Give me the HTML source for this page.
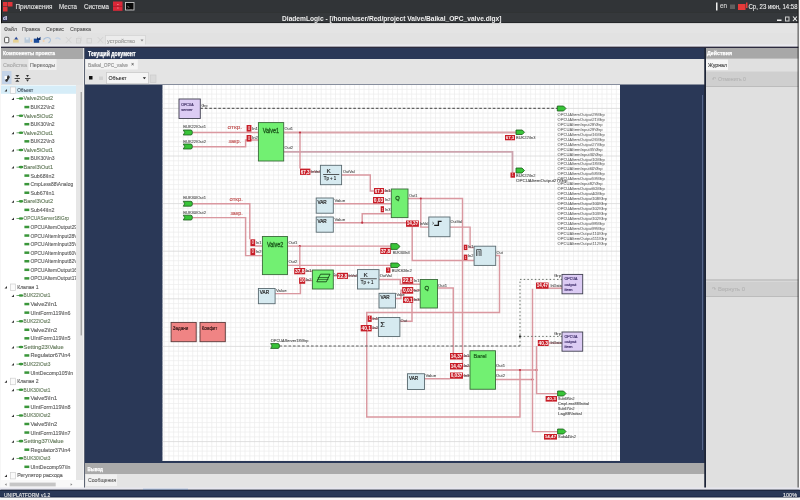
<!DOCTYPE html><html><head><meta charset="utf-8"><style>html,body{margin:0;padding:0;width:800px;height:500px;overflow:hidden;background:#2b2b2b}</style></head><body><svg width="800" height="500" viewBox="0 0 800 500" font-family="&quot;Liberation Sans&quot;, sans-serif" style="position:absolute;left:0;top:0;will-change:transform">
<rect x="0.00" y="0.00" width="800.00" height="12.50" fill="#313437"/>
<rect x="3.00" y="2.00" width="4.50" height="4.50" fill="#e0343a"/>
<rect x="8.00" y="2.00" width="4.50" height="4.50" fill="#e0343a"/>
<rect x="3.00" y="7.00" width="4.50" height="4.50" fill="#e0343a"/>
<text x="15.50" y="8.50" font-size="7.5" fill="#e6e6e6" stroke="#e6e6e6" stroke-width="0.12" textLength="37.00" lengthAdjust="spacingAndGlyphs">Приложения</text>
<text x="59.00" y="8.50" font-size="7.5" fill="#e6e6e6" stroke="#e6e6e6" stroke-width="0.12" textLength="18.00" lengthAdjust="spacingAndGlyphs">Места</text>
<text x="84.00" y="8.50" font-size="7.5" fill="#e6e6e6" stroke="#e6e6e6" stroke-width="0.12" textLength="25.00" lengthAdjust="spacingAndGlyphs">Система</text>
<rect x="113.00" y="1.50" width="9.50" height="9.30" fill="#dc2838"/>
<rect x="113.00" y="5.90" width="9.50" height="0.70" fill="#a01828"/>
<rect x="117.40" y="4.00" width="1.00" height="1.00" fill="#f4b0b8"/>
<rect x="117.40" y="7.50" width="1.00" height="1.00" fill="#f4b0b8"/>
<rect x="125.50" y="2.50" width="8.50" height="7.50" fill="#080808" stroke="#c8c8c8" stroke-width="0.9"/>
<text x="127.00" y="8.60" font-size="5" fill="#9a9a9a" textLength="5.00" lengthAdjust="spacingAndGlyphs">&gt;_</text>
<rect x="716.00" y="2.50" width="1.50" height="8.00" fill="#eeeeee"/>
<text x="720.00" y="8.34" font-size="6.5" fill="#d8d8d8" stroke="#d8d8d8" stroke-width="0.12" textLength="7.00" lengthAdjust="spacingAndGlyphs">en</text>
<rect x="730.00" y="4.50" width="5.00" height="4.50" fill="#606060"/>
<rect x="738.00" y="4.00" width="7.50" height="6.00" fill="#e63a3a"/>
<rect x="746.00" y="2.50" width="1.50" height="5.50" fill="#e63a3a"/>
<text x="748.50" y="8.88" font-size="8" fill="#f0f0f0" stroke="#f0f0f0" stroke-width="0.12" textLength="49.00" lengthAdjust="spacingAndGlyphs">Ср, 23 июн, 14:58</text>
<rect x="0.00" y="12.50" width="800.00" height="10.80" fill="#35383b"/>
<rect x="0.00" y="22.30" width="800.00" height="1.00" fill="#202224"/>
<rect x="2.80" y="16.40" width="4.60" height="4.00" fill="#2a2a6a"/>
<text x="3.00" y="20.00" font-size="4.5" fill="#ffffff" textLength="4.00" lengthAdjust="spacingAndGlyphs" font-weight="bold">dl</text>
<text x="282.00" y="20.60" font-size="6.8" fill="#f0f0f0" textLength="219.50" lengthAdjust="spacingAndGlyphs" font-weight="bold">DiademLogic - [/home/user/Red/project Valve/Baikal_OPC_valve.dlgx]</text>
<rect x="777.00" y="19.50" width="4.50" height="1.50" fill="#eeeeee"/>
<rect x="785.50" y="17.00" width="3.50" height="4.00" fill="none" stroke="#d0d0d0" stroke-width="1"/>
<polyline points="793.00,16.50 797.00,21.00" fill="none" stroke="#eeeeee" stroke-width="1.1"/>
<polyline points="797.00,16.50 793.00,21.00" fill="none" stroke="#eeeeee" stroke-width="1.1"/>
<rect x="0.00" y="23.30" width="800.00" height="22.70" fill="#e2e2e2"/>
<rect x="0.00" y="23.30" width="800.00" height="9.70" fill="#e4e4e4"/>
<rect x="0.00" y="23.50" width="1.00" height="476.50" fill="#1c1c1c"/>
<text x="4.00" y="30.66" font-size="6" fill="#5a5a5a" stroke="#5a5a5a" stroke-width="0.12" textLength="13.00" lengthAdjust="spacingAndGlyphs">Файл</text>
<text x="22.00" y="30.66" font-size="6" fill="#5a5a5a" stroke="#5a5a5a" stroke-width="0.12" textLength="18.00" lengthAdjust="spacingAndGlyphs">Правка</text>
<text x="46.00" y="30.66" font-size="6" fill="#5a5a5a" stroke="#5a5a5a" stroke-width="0.12" textLength="18.00" lengthAdjust="spacingAndGlyphs">Сервис</text>
<text x="70.00" y="30.66" font-size="6" fill="#5a5a5a" stroke="#5a5a5a" stroke-width="0.12" textLength="21.00" lengthAdjust="spacingAndGlyphs">Справка</text>
<rect x="4.6" y="37.3" width="4.2" height="5.4" rx="0.8" fill="#fbfbfb" stroke="#333" stroke-width="0.8"/>
<rect x="13.00" y="39.40" width="5.70" height="3.20" fill="#e6d296"/>
<polygon points="14.2,39.4 16.2,36.7 18.2,39.4" fill="#2a4a9a"/>
<rect x="24.50" y="37.50" width="5.50" height="5.30" fill="#b9c9d9"/>
<rect x="26.00" y="37.50" width="2.50" height="2.00" fill="#dfe8f0"/>
<rect x="33.80" y="38.60" width="5.40" height="4.20" fill="#1a4a9a"/>
<polygon points="37,36.7 38.5,38.5 40.5,36.7 40.5,40 37,40" fill="#0c2c6a"/>
<rect x="30.50" y="39.50" width="1.70" height="2.50" fill="#f0c8a0"/>
<path d="M43.5,39.5 Q47,36 50,38.5 Q51.5,41 48.5,42.8" fill="none" stroke="#a8c0dc" stroke-width="1.1"/>
<rect x="42.80" y="40.00" width="1.70" height="2.00" fill="#f2d2b0"/>
<path d="M60.5,39.5 Q57.5,36.5 55.5,39 " fill="none" stroke="#c4d4e8" stroke-width="1.1"/>
<polyline points="66.00,37.20 71.30,42.80" fill="none" stroke="#d2d2d2" stroke-width="1"/>
<polyline points="71.30,37.20 66.00,42.80" fill="none" stroke="#d2d2d2" stroke-width="1"/>
<rect x="76.50" y="38.50" width="4.00" height="4.50" fill="none" stroke="#cfcfcf" stroke-width="0.8"/>
<rect x="78.00" y="37.00" width="3.50" height="4.00" fill="none" stroke="#d8d8d8" stroke-width="0.7"/>
<rect x="87.00" y="38.50" width="4.50" height="4.50" fill="none" stroke="#cfcfcf" stroke-width="0.8"/>
<polyline points="97.80,37.20 103.00,42.80" fill="none" stroke="#d2d2d2" stroke-width="1"/>
<polyline points="103.00,37.20 97.80,42.80" fill="none" stroke="#d2d2d2" stroke-width="1"/>
<rect x="105.50" y="35.50" width="40.00" height="10.00" fill="#ececec" stroke="#d4d4d4" stroke-width="0.8"/>
<text x="107.00" y="42.66" font-size="6" fill="#9a9a9a" stroke="#9a9a9a" stroke-width="0.12" textLength="28.00" lengthAdjust="spacingAndGlyphs">устройство</text>
<polygon points="140.5,39.5 143.5,39.5 142,41.5" fill="#888"/>
<rect x="0.00" y="44.50" width="800.00" height="2.30" fill="#eaeaf0"/>
<rect x="0.00" y="46.80" width="800.00" height="1.20" fill="#2c2a3e"/>
<rect x="1.00" y="48.00" width="83.00" height="441.00" fill="#e2e2e2"/>
<rect x="1.00" y="48.00" width="82.50" height="11.00" fill="#a8a8a8"/>
<text x="3.00" y="55.23" font-size="6.2" fill="#ffffff" stroke="#ffffff" stroke-width="0.25" textLength="52.00" lengthAdjust="spacingAndGlyphs" font-weight="bold">Компоненты проекта</text>
<rect x="28.50" y="59.00" width="28.00" height="11.00" fill="#f1f1f1"/>
<text x="3.00" y="66.66" font-size="6" fill="#a8a8a8" stroke="#a8a8a8" stroke-width="0.12" textLength="24.00" lengthAdjust="spacingAndGlyphs">Свойства</text>
<text x="30.00" y="66.66" font-size="6" fill="#707070" stroke="#707070" stroke-width="0.12" textLength="25.00" lengthAdjust="spacingAndGlyphs">Переходы</text>
<rect x="2.00" y="71.00" width="9.50" height="13.00" fill="#c3d3e8"/>
<polygon points="5,81 8,75 10,77 7,82" fill="#333"/>
<rect x="4.50" y="76.00" width="2.50" height="3.00" fill="#fafafa"/>
<polygon points="15.3,75 19.3,75 17.3,77.3" fill="#333"/><rect x="14.6" y="78" width="5.4" height="0.9" fill="#333"/><polygon points="15.3,81.7 19.3,81.7 17.3,79.5" fill="#333"/>
<polygon points="26,75 29,75 27.5,77.2" fill="#333"/><rect x="25" y="78" width="5.4" height="0.9" fill="#333"/><polygon points="26,79.6 29,79.6 27.5,81.8" fill="#333"/>
<rect x="1.00" y="85.00" width="75.00" height="397.00" fill="#ffffff"/>
<rect x="76.00" y="85.00" width="7.50" height="397.00" fill="#e6e6e6"/>
<rect x="80.70" y="92.00" width="1.00" height="243.40" fill="#8a8a8a"/>
<rect x="83.50" y="48.00" width="1.00" height="441.00" fill="#fbfbfb"/>
<rect x="1.00" y="85.50" width="75.00" height="8.30" fill="#d6edf8"/>
<svg x="1" y="85" width="75" height="397" overflow="hidden"><g transform="translate(-1,-85)">
<polygon points="4.5,91.50 7,89.00 7,91.50" fill="#333"/>
<rect x="10.50" y="87.00" width="5.00" height="6.50" fill="#fbfbfb" stroke="#cfcfcf" stroke-width="0.7"/>
<text x="17.20" y="91.90" font-size="5.3" fill="#3e4e5c" stroke="#3e4e5c" stroke-width="0.12" textLength="16.02" lengthAdjust="spacingAndGlyphs">Объект</text>
<polygon points="11.5,100.06 14,97.56 14,100.06" fill="#333"/>
<rect x="16.50" y="98.27" width="2.50" height="0.70" fill="#3a8a3a"/>
<ellipse cx="21" cy="98.56" rx="2.4" ry="1.3" fill="#3a963a"/>
<text x="23.60" y="100.47" font-size="5.3" fill="#63795a" stroke="#63795a" stroke-width="0.12" textLength="29.37" lengthAdjust="spacingAndGlyphs">Valve2\Out2</text>
<rect x="24.40" y="105.83" width="4.90" height="2.50" fill="#3a963a"/>
<text x="30.40" y="109.03" font-size="5.3" fill="#606060" stroke="#606060" stroke-width="0.12" textLength="24.03" lengthAdjust="spacingAndGlyphs">BUK22\In2</text>
<polygon points="11.5,117.19 14,114.69 14,117.19" fill="#333"/>
<rect x="16.50" y="115.39" width="2.50" height="0.70" fill="#3a8a3a"/>
<ellipse cx="21" cy="115.69" rx="2.4" ry="1.3" fill="#3a963a"/>
<text x="23.60" y="117.59" font-size="5.3" fill="#63795a" stroke="#63795a" stroke-width="0.12" textLength="29.37" lengthAdjust="spacingAndGlyphs">Valve5\Out2</text>
<rect x="24.40" y="122.96" width="4.90" height="2.50" fill="#3a963a"/>
<text x="30.40" y="126.16" font-size="5.3" fill="#606060" stroke="#606060" stroke-width="0.12" textLength="24.03" lengthAdjust="spacingAndGlyphs">BUK30\In2</text>
<polygon points="11.5,134.32 14,131.82 14,134.32" fill="#333"/>
<rect x="16.50" y="132.52" width="2.50" height="0.70" fill="#3a8a3a"/>
<ellipse cx="21" cy="132.82" rx="2.4" ry="1.3" fill="#3a963a"/>
<text x="23.60" y="134.72" font-size="5.3" fill="#63795a" stroke="#63795a" stroke-width="0.12" textLength="29.37" lengthAdjust="spacingAndGlyphs">Valve2\Out1</text>
<rect x="24.40" y="140.09" width="4.90" height="2.50" fill="#3a963a"/>
<text x="30.40" y="143.29" font-size="5.3" fill="#606060" stroke="#606060" stroke-width="0.12" textLength="24.03" lengthAdjust="spacingAndGlyphs">BUK22\In3</text>
<polygon points="11.5,151.45 14,148.95 14,151.45" fill="#333"/>
<rect x="16.50" y="149.65" width="2.50" height="0.70" fill="#3a8a3a"/>
<ellipse cx="21" cy="149.95" rx="2.4" ry="1.3" fill="#3a963a"/>
<text x="23.60" y="151.85" font-size="5.3" fill="#63795a" stroke="#63795a" stroke-width="0.12" textLength="29.37" lengthAdjust="spacingAndGlyphs">Valve5\Out1</text>
<rect x="24.40" y="157.22" width="4.90" height="2.50" fill="#3a963a"/>
<text x="30.40" y="160.42" font-size="5.3" fill="#606060" stroke="#606060" stroke-width="0.12" textLength="24.03" lengthAdjust="spacingAndGlyphs">BUK30\In3</text>
<polygon points="11.5,168.58 14,166.08 14,168.58" fill="#333"/>
<rect x="16.50" y="166.78" width="2.50" height="0.70" fill="#3a8a3a"/>
<ellipse cx="21" cy="167.08" rx="2.4" ry="1.3" fill="#3a963a"/>
<text x="23.60" y="168.98" font-size="5.3" fill="#63795a" stroke="#63795a" stroke-width="0.12" textLength="29.37" lengthAdjust="spacingAndGlyphs">Barel3\Out1</text>
<rect x="24.40" y="174.35" width="4.90" height="2.50" fill="#3a963a"/>
<text x="30.40" y="177.55" font-size="5.3" fill="#606060" stroke="#606060" stroke-width="0.12" textLength="24.03" lengthAdjust="spacingAndGlyphs">Sub68\In2</text>
<rect x="24.40" y="182.91" width="4.90" height="2.50" fill="#3a963a"/>
<text x="30.40" y="186.11" font-size="5.3" fill="#606060" stroke="#606060" stroke-width="0.12" textLength="42.72" lengthAdjust="spacingAndGlyphs">CmpLess88\Analog</text>
<rect x="24.40" y="191.48" width="4.90" height="2.50" fill="#3a963a"/>
<text x="30.40" y="194.68" font-size="5.3" fill="#606060" stroke="#606060" stroke-width="0.12" textLength="24.03" lengthAdjust="spacingAndGlyphs">Sub67\In1</text>
<polygon points="11.5,202.84 14,200.34 14,202.84" fill="#333"/>
<rect x="16.50" y="201.04" width="2.50" height="0.70" fill="#3a8a3a"/>
<ellipse cx="21" cy="201.34" rx="2.4" ry="1.3" fill="#3a963a"/>
<text x="23.60" y="203.25" font-size="5.3" fill="#63795a" stroke="#63795a" stroke-width="0.12" textLength="29.37" lengthAdjust="spacingAndGlyphs">Barel3\Out2</text>
<rect x="24.40" y="208.61" width="4.90" height="2.50" fill="#3a963a"/>
<text x="30.40" y="211.81" font-size="5.3" fill="#606060" stroke="#606060" stroke-width="0.12" textLength="24.03" lengthAdjust="spacingAndGlyphs">Sub44\In2</text>
<polygon points="11.5,219.97 14,217.47 14,219.97" fill="#333"/>
<rect x="16.50" y="218.17" width="2.50" height="0.70" fill="#3a8a3a"/>
<ellipse cx="21" cy="218.47" rx="2.4" ry="1.3" fill="#3a963a"/>
<text x="23.60" y="220.38" font-size="5.3" fill="#63795a" stroke="#63795a" stroke-width="0.12" textLength="45.39" lengthAdjust="spacingAndGlyphs">OPCUAServer18\Grp</text>
<rect x="24.40" y="225.74" width="4.90" height="2.50" fill="#3a963a"/>
<text x="30.40" y="228.94" font-size="5.3" fill="#606060" stroke="#606060" stroke-width="0.12" textLength="56.07" lengthAdjust="spacingAndGlyphs">OPCUAItemOutput29\Grp</text>
<rect x="24.40" y="234.30" width="4.90" height="2.50" fill="#3a963a"/>
<text x="30.40" y="237.50" font-size="5.3" fill="#606060" stroke="#606060" stroke-width="0.12" textLength="53.40" lengthAdjust="spacingAndGlyphs">OPCUAItemInput28\Grp</text>
<rect x="24.40" y="242.87" width="4.90" height="2.50" fill="#3a963a"/>
<text x="30.40" y="246.07" font-size="5.3" fill="#606060" stroke="#606060" stroke-width="0.12" textLength="53.40" lengthAdjust="spacingAndGlyphs">OPCUAItemInput35\Grp</text>
<rect x="24.40" y="251.43" width="4.90" height="2.50" fill="#3a963a"/>
<text x="30.40" y="254.63" font-size="5.3" fill="#606060" stroke="#606060" stroke-width="0.12" textLength="53.40" lengthAdjust="spacingAndGlyphs">OPCUAItemInput60\Grp</text>
<rect x="24.40" y="260.00" width="4.90" height="2.50" fill="#3a963a"/>
<text x="30.40" y="263.20" font-size="5.3" fill="#606060" stroke="#606060" stroke-width="0.12" textLength="53.40" lengthAdjust="spacingAndGlyphs">OPCUAItemInput82\Grp</text>
<rect x="24.40" y="268.56" width="4.90" height="2.50" fill="#3a963a"/>
<text x="30.40" y="271.76" font-size="5.3" fill="#606060" stroke="#606060" stroke-width="0.12" textLength="56.07" lengthAdjust="spacingAndGlyphs">OPCUAItemOutput16\Grp</text>
<rect x="24.40" y="277.13" width="4.90" height="2.50" fill="#3a963a"/>
<text x="30.40" y="280.33" font-size="5.3" fill="#606060" stroke="#606060" stroke-width="0.12" textLength="56.07" lengthAdjust="spacingAndGlyphs">OPCUAItemOutput17\Grp</text>
<polygon points="4.5,288.50 7,286.00 7,288.50" fill="#333"/>
<rect x="10.50" y="284.00" width="5.00" height="6.50" fill="#fbfbfb" stroke="#cfcfcf" stroke-width="0.7"/>
<text x="17.20" y="288.89" font-size="5.3" fill="#5a5a5a" stroke="#5a5a5a" stroke-width="0.12" textLength="21.36" lengthAdjust="spacingAndGlyphs">Клапан 1</text>
<polygon points="11.5,297.06 14,294.56 14,297.06" fill="#333"/>
<rect x="16.50" y="295.26" width="2.50" height="0.70" fill="#3a8a3a"/>
<ellipse cx="21" cy="295.56" rx="2.4" ry="1.3" fill="#3a963a"/>
<text x="23.60" y="297.46" font-size="5.3" fill="#63795a" stroke="#63795a" stroke-width="0.12" textLength="26.70" lengthAdjust="spacingAndGlyphs">BUK22\Out1</text>
<rect x="24.40" y="302.82" width="4.90" height="2.50" fill="#3a963a"/>
<text x="30.40" y="306.02" font-size="5.3" fill="#606060" stroke="#606060" stroke-width="0.12" textLength="26.70" lengthAdjust="spacingAndGlyphs">Valve2\In1</text>
<rect x="24.40" y="311.39" width="4.90" height="2.50" fill="#3a963a"/>
<text x="30.40" y="314.59" font-size="5.3" fill="#606060" stroke="#606060" stroke-width="0.12" textLength="40.05" lengthAdjust="spacingAndGlyphs">UIntForm119\In6</text>
<polygon points="11.5,322.75 14,320.25 14,322.75" fill="#333"/>
<rect x="16.50" y="320.95" width="2.50" height="0.70" fill="#3a8a3a"/>
<ellipse cx="21" cy="321.25" rx="2.4" ry="1.3" fill="#3a963a"/>
<text x="23.60" y="323.15" font-size="5.3" fill="#63795a" stroke="#63795a" stroke-width="0.12" textLength="26.70" lengthAdjust="spacingAndGlyphs">BUK22\Out2</text>
<rect x="24.40" y="328.52" width="4.90" height="2.50" fill="#3a963a"/>
<text x="30.40" y="331.72" font-size="5.3" fill="#606060" stroke="#606060" stroke-width="0.12" textLength="26.70" lengthAdjust="spacingAndGlyphs">Valve2\In2</text>
<rect x="24.40" y="337.08" width="4.90" height="2.50" fill="#3a963a"/>
<text x="30.40" y="340.28" font-size="5.3" fill="#606060" stroke="#606060" stroke-width="0.12" textLength="40.05" lengthAdjust="spacingAndGlyphs">UIntForm119\In5</text>
<polygon points="11.5,348.45 14,345.95 14,348.45" fill="#333"/>
<rect x="16.50" y="346.65" width="2.50" height="0.70" fill="#3a8a3a"/>
<ellipse cx="21" cy="346.95" rx="2.4" ry="1.3" fill="#3a963a"/>
<text x="23.60" y="348.85" font-size="5.3" fill="#63795a" stroke="#63795a" stroke-width="0.12" textLength="40.05" lengthAdjust="spacingAndGlyphs">Setting23\Value</text>
<rect x="24.40" y="354.21" width="4.90" height="2.50" fill="#3a963a"/>
<text x="30.40" y="357.41" font-size="5.3" fill="#606060" stroke="#606060" stroke-width="0.12" textLength="40.05" lengthAdjust="spacingAndGlyphs">Regulator67\In4</text>
<polygon points="11.5,365.58 14,363.08 14,365.58" fill="#333"/>
<rect x="16.50" y="363.78" width="2.50" height="0.70" fill="#3a8a3a"/>
<ellipse cx="21" cy="364.08" rx="2.4" ry="1.3" fill="#3a963a"/>
<text x="23.60" y="365.98" font-size="5.3" fill="#63795a" stroke="#63795a" stroke-width="0.12" textLength="26.70" lengthAdjust="spacingAndGlyphs">BUK22\Out3</text>
<rect x="24.40" y="371.34" width="4.90" height="2.50" fill="#3a963a"/>
<text x="30.40" y="374.54" font-size="5.3" fill="#606060" stroke="#606060" stroke-width="0.12" textLength="42.72" lengthAdjust="spacingAndGlyphs">UIntDecomp105\In</text>
<polygon points="4.5,382.71 7,380.21 7,382.71" fill="#333"/>
<rect x="10.50" y="378.21" width="5.00" height="6.50" fill="#fbfbfb" stroke="#cfcfcf" stroke-width="0.7"/>
<text x="17.20" y="383.11" font-size="5.3" fill="#5a5a5a" stroke="#5a5a5a" stroke-width="0.12" textLength="21.36" lengthAdjust="spacingAndGlyphs">Клапан 2</text>
<polygon points="11.5,391.27 14,388.77 14,391.27" fill="#333"/>
<rect x="16.50" y="389.47" width="2.50" height="0.70" fill="#3a8a3a"/>
<ellipse cx="21" cy="389.77" rx="2.4" ry="1.3" fill="#3a963a"/>
<text x="23.60" y="391.67" font-size="5.3" fill="#63795a" stroke="#63795a" stroke-width="0.12" textLength="26.70" lengthAdjust="spacingAndGlyphs">BUK30\Out1</text>
<rect x="24.40" y="397.04" width="4.90" height="2.50" fill="#3a963a"/>
<text x="30.40" y="400.24" font-size="5.3" fill="#606060" stroke="#606060" stroke-width="0.12" textLength="26.70" lengthAdjust="spacingAndGlyphs">Valve5\In1</text>
<rect x="24.40" y="405.60" width="4.90" height="2.50" fill="#3a963a"/>
<text x="30.40" y="408.80" font-size="5.3" fill="#606060" stroke="#606060" stroke-width="0.12" textLength="40.05" lengthAdjust="spacingAndGlyphs">UIntForm119\In8</text>
<polygon points="11.5,416.97 14,414.47 14,416.97" fill="#333"/>
<rect x="16.50" y="415.17" width="2.50" height="0.70" fill="#3a8a3a"/>
<ellipse cx="21" cy="415.47" rx="2.4" ry="1.3" fill="#3a963a"/>
<text x="23.60" y="417.37" font-size="5.3" fill="#63795a" stroke="#63795a" stroke-width="0.12" textLength="26.70" lengthAdjust="spacingAndGlyphs">BUK30\Out2</text>
<rect x="24.40" y="422.73" width="4.90" height="2.50" fill="#3a963a"/>
<text x="30.40" y="425.93" font-size="5.3" fill="#606060" stroke="#606060" stroke-width="0.12" textLength="26.70" lengthAdjust="spacingAndGlyphs">Valve5\In2</text>
<rect x="24.40" y="431.30" width="4.90" height="2.50" fill="#3a963a"/>
<text x="30.40" y="434.50" font-size="5.3" fill="#606060" stroke="#606060" stroke-width="0.12" textLength="40.05" lengthAdjust="spacingAndGlyphs">UIntForm119\In7</text>
<polygon points="11.5,442.66 14,440.16 14,442.66" fill="#333"/>
<rect x="16.50" y="440.86" width="2.50" height="0.70" fill="#3a8a3a"/>
<ellipse cx="21" cy="441.16" rx="2.4" ry="1.3" fill="#3a963a"/>
<text x="23.60" y="443.06" font-size="5.3" fill="#63795a" stroke="#63795a" stroke-width="0.12" textLength="40.05" lengthAdjust="spacingAndGlyphs">Setting37\Value</text>
<rect x="24.40" y="448.43" width="4.90" height="2.50" fill="#3a963a"/>
<text x="30.40" y="451.63" font-size="5.3" fill="#606060" stroke="#606060" stroke-width="0.12" textLength="40.05" lengthAdjust="spacingAndGlyphs">Regulator37\In4</text>
<polygon points="11.5,459.79 14,457.29 14,459.79" fill="#333"/>
<rect x="16.50" y="457.99" width="2.50" height="0.70" fill="#3a8a3a"/>
<ellipse cx="21" cy="458.29" rx="2.4" ry="1.3" fill="#3a963a"/>
<text x="23.60" y="460.19" font-size="5.3" fill="#63795a" stroke="#63795a" stroke-width="0.12" textLength="26.70" lengthAdjust="spacingAndGlyphs">BUK30\Out3</text>
<rect x="24.40" y="465.56" width="4.90" height="2.50" fill="#3a963a"/>
<text x="30.40" y="468.76" font-size="5.3" fill="#606060" stroke="#606060" stroke-width="0.12" textLength="40.05" lengthAdjust="spacingAndGlyphs">UIntDecomp97\In</text>
<polygon points="4.5,476.92 7,474.42 7,476.92" fill="#333"/>
<rect x="10.50" y="472.42" width="5.00" height="6.50" fill="#fbfbfb" stroke="#cfcfcf" stroke-width="0.7"/>
<text x="17.20" y="477.32" font-size="5.3" fill="#5a5a5a" stroke="#5a5a5a" stroke-width="0.12" textLength="45.39" lengthAdjust="spacingAndGlyphs">Регулятор расхода</text>
</g></svg>
<rect x="1.00" y="480.00" width="83.00" height="9.00" fill="#f8f8f8"/>
<polygon points="4.8,484.5 6.6,483.2 6.6,485.8" fill="#888"/>
<rect x="9.60" y="482.60" width="46.10" height="3.80" fill="#c6c6c6"/>
<polygon points="70.6,483.2 72.4,484.5 70.6,485.8" fill="#888"/>
<rect x="84.50" y="48.00" width="620.00" height="441.00" fill="#2a3857"/>
<text x="88.00" y="56.27" font-size="6.3" fill="#ffffff" stroke="#ffffff" stroke-width="0.25" textLength="47.50" lengthAdjust="spacingAndGlyphs" font-weight="bold">Текущий документ</text>
<rect x="85.00" y="59.00" width="619.50" height="25.50" fill="#e4e4e4"/>
<rect x="86.00" y="59.40" width="51.80" height="10.00" fill="#f4f4f4"/>
<text x="88.00" y="66.56" font-size="6" fill="#8c8c8c" stroke="#8c8c8c" stroke-width="0.12" textLength="40.00" lengthAdjust="spacingAndGlyphs">Baikal_OPC_valve</text>
<text x="131.30" y="66.38" font-size="5.5" fill="#666" stroke="#666" stroke-width="0.12" textLength="2.70" lengthAdjust="spacingAndGlyphs">×</text>
<rect x="89.00" y="76.00" width="3.50" height="3.50" fill="#101010"/>
<rect x="99.50" y="76.50" width="1.00" height="3.50" fill="#c0c0c0"/>
<rect x="101.50" y="76.50" width="1.00" height="3.50" fill="#c0c0c0"/>
<rect x="106.50" y="72.50" width="41.90" height="11.20" fill="#f5f5f5" stroke="#cacaca" stroke-width="0.8"/>
<text x="108.50" y="80.03" font-size="6.2" fill="#303030" stroke="#303030" stroke-width="0.12" textLength="18.00" lengthAdjust="spacingAndGlyphs">Объект</text>
<polygon points="142.8,77.3 146,77.3 144.4,79.3" fill="#222"/>
<rect x="150.20" y="75.00" width="5.80" height="7.50" fill="#dadada" stroke="#c8c8c8" stroke-width="0.6"/>
<rect x="702.00" y="95.00" width="1.00" height="355.00" fill="#56668a"/>
<rect x="85.00" y="463.00" width="619.50" height="11.00" fill="#aaaaaa"/>
<text x="87.50" y="470.59" font-size="5.8" fill="#ffffff" stroke="#ffffff" stroke-width="0.25" textLength="15.50" lengthAdjust="spacingAndGlyphs" font-weight="bold">Вывод</text>
<rect x="85.00" y="474.00" width="619.50" height="15.00" fill="#e4e4e4"/>
<rect x="86.00" y="474.50" width="31.00" height="11.50" fill="#f1f1f1"/>
<text x="88.00" y="482.09" font-size="5.8" fill="#606060" stroke="#606060" stroke-width="0.12" textLength="28.00" lengthAdjust="spacingAndGlyphs">Сообщения</text>
<rect x="704.50" y="48.00" width="1.50" height="441.00" fill="#1d2538"/>
<rect x="706.00" y="48.00" width="93.00" height="441.00" fill="#e0e0e0"/>
<rect x="706.00" y="48.00" width="93.00" height="10.60" fill="#a8a8a8"/>
<text x="707.00" y="55.23" font-size="6.2" fill="#ffffff" stroke="#ffffff" stroke-width="0.25" textLength="25.00" lengthAdjust="spacingAndGlyphs" font-weight="bold">Действия</text>
<rect x="706.00" y="59.50" width="22.00" height="10.50" fill="#f6f6f6"/>
<text x="708.00" y="66.66" font-size="6" fill="#404040" stroke="#404040" stroke-width="0.12" textLength="19.00" lengthAdjust="spacingAndGlyphs">Журнал</text>
<rect x="706.00" y="71.50" width="93.00" height="14.50" fill="#cfcfcf"/>
<rect x="706.00" y="86.00" width="93.00" height="1.00" fill="#bcbcbc"/>
<text x="712.00" y="80.78" font-size="5.5" fill="#b4b4b4" stroke="#b4b4b4" stroke-width="0.12" textLength="4.00" lengthAdjust="spacingAndGlyphs">↶</text>
<text x="718.00" y="80.89" font-size="5.8" fill="#b4b4b4" stroke="#b4b4b4" stroke-width="0.12" textLength="28.00" lengthAdjust="spacingAndGlyphs">Отменить 0</text>
<rect x="706.00" y="279.00" width="93.00" height="2.00" fill="#c6c6c6"/>
<rect x="706.00" y="281.50" width="93.00" height="14.50" fill="#cfcfcf"/>
<rect x="706.00" y="296.00" width="93.00" height="1.00" fill="#bcbcbc"/>
<text x="712.00" y="290.98" font-size="5.5" fill="#b4b4b4" stroke="#b4b4b4" stroke-width="0.12" textLength="4.00" lengthAdjust="spacingAndGlyphs">↷</text>
<text x="718.00" y="291.09" font-size="5.8" fill="#b4b4b4" stroke="#b4b4b4" stroke-width="0.12" textLength="27.00" lengthAdjust="spacingAndGlyphs">Вернуть 0</text>
<rect x="797.70" y="0.00" width="1.00" height="500.00" fill="#111111"/>
<rect x="798.70" y="0.00" width="1.30" height="500.00" fill="#f6f6f6"/>
<rect x="0.00" y="0.00" width="1.00" height="500.00" fill="#f6f6f6"/>
<rect x="1.00" y="0.00" width="1.00" height="23.20" fill="#111111"/>
<rect x="0.00" y="489.60" width="800.00" height="7.90" fill="#2a3857"/>
<rect x="0.00" y="489.60" width="800.00" height="1.00" fill="#141c30"/>
<rect x="0.00" y="496.30" width="800.00" height="1.20" fill="#1d2848"/>
<rect x="0.00" y="497.50" width="800.00" height="2.50" fill="#f8f8f8"/>
<rect x="0.00" y="487.50" width="800.00" height="2.10" fill="#e6e6ee"/>
<g opacity="0.35">
<rect x="143.00" y="488.60" width="45.00" height="1.20" fill="#5080c0"/>
</g>
<text x="4.00" y="496.66" font-size="6" fill="#e8e8e8" stroke="#e8e8e8" stroke-width="0.12" textLength="46.40" lengthAdjust="spacingAndGlyphs">UNIPLATFORM v1.2</text>
<text x="783.00" y="496.60" font-size="5" fill="#e8e8e8" stroke="#e8e8e8" stroke-width="0.12" textLength="14.00" lengthAdjust="spacingAndGlyphs">100%</text>
<rect x="162.50" y="85.00" width="457.50" height="376.00" fill="#ffffff"/>
<svg x="162.5" y="85" width="457.5" height="376" overflow="hidden"><g transform="translate(-162.5,-85)">
<path d="M159.40 85V461M164.16 85V461M168.92 85V461M173.68 85V461M178.44 85V461M183.20 85V461M187.96 85V461M192.72 85V461M197.48 85V461M202.24 85V461M207.00 85V461M211.76 85V461M216.52 85V461M221.28 85V461M226.04 85V461M230.80 85V461M235.56 85V461M240.32 85V461M245.08 85V461M249.84 85V461M254.60 85V461M259.36 85V461M264.12 85V461M268.88 85V461M273.64 85V461M278.40 85V461M283.16 85V461M287.92 85V461M292.68 85V461M297.44 85V461M302.20 85V461M306.96 85V461M311.72 85V461M316.48 85V461M321.24 85V461M326.00 85V461M330.76 85V461M335.52 85V461M340.28 85V461M345.04 85V461M349.80 85V461M354.56 85V461M359.32 85V461M364.08 85V461M368.84 85V461M373.60 85V461M378.36 85V461M383.12 85V461M387.88 85V461M392.64 85V461M397.40 85V461M402.16 85V461M406.92 85V461M411.68 85V461M416.44 85V461M421.20 85V461M425.96 85V461M430.72 85V461M435.48 85V461M440.24 85V461M445.00 85V461M449.76 85V461M454.52 85V461M459.28 85V461M464.04 85V461M468.80 85V461M473.56 85V461M478.32 85V461M483.08 85V461M487.84 85V461M492.60 85V461M497.36 85V461M502.12 85V461M506.88 85V461M511.64 85V461M516.40 85V461M521.16 85V461M525.92 85V461M530.68 85V461M535.44 85V461M540.20 85V461M544.96 85V461M549.72 85V461M554.48 85V461M559.24 85V461M564.00 85V461M568.76 85V461M573.52 85V461M578.28 85V461M583.04 85V461M587.80 85V461M592.56 85V461M597.32 85V461M602.08 85V461M606.84 85V461M611.60 85V461M616.36 85V461M162.5 84.60H620M162.5 89.36H620M162.5 94.12H620M162.5 98.88H620M162.5 103.64H620M162.5 113.16H620M162.5 117.92H620M162.5 122.68H620M162.5 127.44H620M162.5 132.20H620M162.5 136.96H620M162.5 141.72H620M162.5 146.48H620M162.5 151.24H620M162.5 160.76H620M162.5 165.52H620M162.5 170.28H620M162.5 175.04H620M162.5 179.80H620M162.5 184.56H620M162.5 189.32H620M162.5 194.08H620M162.5 198.84H620M162.5 208.36H620M162.5 213.12H620M162.5 217.88H620M162.5 222.64H620M162.5 227.40H620M162.5 232.16H620M162.5 236.92H620M162.5 241.68H620M162.5 246.44H620M162.5 255.96H620M162.5 260.72H620M162.5 265.48H620M162.5 270.24H620M162.5 275.00H620M162.5 279.76H620M162.5 284.52H620M162.5 289.28H620M162.5 294.04H620M162.5 303.56H620M162.5 308.32H620M162.5 313.08H620M162.5 317.84H620M162.5 322.60H620M162.5 327.36H620M162.5 332.12H620M162.5 336.88H620M162.5 341.64H620M162.5 351.16H620M162.5 355.92H620M162.5 360.68H620M162.5 365.44H620M162.5 370.20H620M162.5 374.96H620M162.5 379.72H620M162.5 384.48H620M162.5 389.24H620M162.5 398.76H620M162.5 403.52H620M162.5 408.28H620M162.5 413.04H620M162.5 417.80H620M162.5 422.56H620M162.5 427.32H620M162.5 432.08H620M162.5 436.84H620M162.5 446.36H620M162.5 451.12H620M162.5 455.88H620M162.5 460.64H620" stroke="#ececec" stroke-width="0.7" fill="none"/>
<path d="M162.5 108.40H620M162.5 156.00H620M162.5 203.60H620M162.5 251.20H620M162.5 298.80H620M162.5 346.40H620M162.5 394.00H620M162.5 441.60H620" stroke="#d8d8d8" stroke-width="0.8" fill="none"/>
<polyline points="192.40,132.50 258.40,132.50" fill="none" stroke="#da98a0" stroke-width="1.45"/>
<polyline points="192.40,146.80 245.60,146.80 245.60,140.00 258.40,140.00" fill="none" stroke="#da98a0" stroke-width="1.45"/>
<polyline points="283.70,132.50 516.00,132.50" fill="none" stroke="#daa4aa" stroke-width="2.0"/>
<polyline points="283.70,151.90 512.50,151.90 512.50,172.50" fill="none" stroke="#cca4ae" stroke-width="1.8"/>
<polyline points="300.00,132.50 300.00,168.60" fill="none" stroke="#da98a0" stroke-width="1.45"/>
<circle cx="300" cy="132.5" r="1.1" fill="#c03040"/>
<polyline points="310.40,171.80 320.40,171.80" fill="none" stroke="#da98a0" stroke-width="1.45"/>
<polyline points="341.60,174.90 370.30,174.90 370.30,191.00 391.30,191.00" fill="none" stroke="#da98a0" stroke-width="1.45"/>
<polyline points="333.30,203.70 391.30,203.70" fill="none" stroke="#da98a0" stroke-width="1.45"/>
<polyline points="333.30,222.70 406.00,222.70" fill="none" stroke="#da98a0" stroke-width="1.45"/>
<polyline points="362.20,222.70 362.20,213.80 391.30,213.80" fill="none" stroke="#da98a0" stroke-width="1.45"/>
<circle cx="362.2" cy="222.7" r="1.1" fill="#c03040"/>
<polyline points="408.00,198.50 462.50,198.50 462.50,366.00" fill="none" stroke="#da98a0" stroke-width="1.45"/>
<polyline points="420.80,198.50 420.80,227.10 428.80,227.10" fill="none" stroke="#da98a0" stroke-width="1.45"/>
<circle cx="420.8" cy="198.5" r="1.1" fill="#c03040"/>
<polyline points="412.20,226.80 412.20,260.50 474.10,260.50" fill="none" stroke="#da98a0" stroke-width="1.45"/>
<polyline points="450.00,227.10 470.10,227.10 470.10,247.40 474.10,247.40" fill="none" stroke="#da98a0" stroke-width="1.45"/>
<polyline points="495.70,255.50 499.50,255.50 499.50,312.50 366.75,312.50 366.75,417.00 520.00,417.00 520.00,370.00" fill="none" stroke="#da98a0" stroke-width="1.45"/>
<polyline points="192.40,203.80 249.80,203.80 249.80,239.30" fill="none" stroke="#da98a0" stroke-width="1.45"/>
<polyline points="255.20,246.00 262.40,246.00" fill="none" stroke="#da98a0" stroke-width="1.45"/>
<polyline points="192.40,217.60 245.60,217.60 245.60,255.60 262.40,255.60" fill="none" stroke="#da98a0" stroke-width="1.45"/>
<polyline points="287.50,246.20 390.80,246.20" fill="none" stroke="#da98a0" stroke-width="1.3"/>
<circle cx="299.8" cy="246.2" r="1.1" fill="#c03040"/>
<polyline points="299.80,246.20 299.80,268.40" fill="none" stroke="#da98a0" stroke-width="1.45"/>
<polyline points="287.50,265.30 390.80,265.30" fill="none" stroke="#da98a0" stroke-width="1.3"/>
<polyline points="275.10,293.60 300.40,293.60 300.40,281.00" fill="none" stroke="#da98a0" stroke-width="1.45"/>
<polyline points="305.20,271.30 312.40,271.30" fill="none" stroke="#da98a0" stroke-width="1.45"/>
<polyline points="305.20,280.50 312.40,280.50" fill="none" stroke="#da98a0" stroke-width="1.45"/>
<polyline points="333.30,275.80 337.10,275.80" fill="none" stroke="#da98a0" stroke-width="1.45"/>
<polyline points="348.00,275.80 357.50,275.80" fill="none" stroke="#da98a0" stroke-width="1.45"/>
<polyline points="379.00,279.50 400.30,279.50 400.30,284.20 420.20,284.20" fill="none" stroke="#da98a0" stroke-width="1.45"/>
<polyline points="395.50,298.50 401.00,298.50 401.00,290.30 420.20,290.30" fill="none" stroke="#da98a0" stroke-width="1.45"/>
<polyline points="413.20,299.80 420.20,299.80" fill="none" stroke="#da98a0" stroke-width="1.45"/>
<polyline points="399.90,321.30 412.00,321.30 412.00,302.90" fill="none" stroke="#da98a0" stroke-width="1.45"/>
<polyline points="371.70,318.70 378.40,318.70" fill="none" stroke="#da98a0" stroke-width="1.45"/>
<polyline points="371.70,328.20 378.40,328.20" fill="none" stroke="#da98a0" stroke-width="1.45"/>
<polyline points="437.50,288.00 453.25,288.00 453.25,353.50" fill="none" stroke="#da98a0" stroke-width="1.45"/>
<polyline points="424.50,378.75 450.00,378.75" fill="none" stroke="#da98a0" stroke-width="1.45"/>
<polyline points="463.00,356.20 470.00,356.20" fill="none" stroke="#da98a0" stroke-width="1.45"/>
<polyline points="463.00,366.20 470.00,366.20" fill="none" stroke="#da98a0" stroke-width="1.45"/>
<polyline points="463.00,375.60 470.00,375.60" fill="none" stroke="#da98a0" stroke-width="1.45"/>
<polyline points="495.50,370.00 536.60,370.00" fill="none" stroke="#da98a0" stroke-width="1.45"/>
<polyline points="495.50,379.50 532.50,379.50" fill="none" stroke="#da98a0" stroke-width="1.45"/>
<circle cx="520" cy="370" r="1.1" fill="#c03040"/>
<circle cx="532.5" cy="379.5" r="1.1" fill="#c03040"/>
<circle cx="536.6" cy="370" r="1.1" fill="#c03040"/>
<polyline points="532.50,288.80 532.50,431.60 557.60,431.60" fill="none" stroke="#da98a0" stroke-width="1.45"/>
<polyline points="536.60,346.00 536.60,393.60 557.60,393.60" fill="none" stroke="#da98a0" stroke-width="1.45"/>
<polyline points="548.60,288.20 562.00,288.20" fill="none" stroke="#da98a0" stroke-width="1.45"/>
<polyline points="548.60,343.00 562.00,343.00" fill="none" stroke="#da98a0" stroke-width="1.45"/>
<polyline points="200.30,108.30 557.50,108.30" fill="none" stroke="#303030" stroke-width="0.9" stroke-dasharray="2.6,1.9"/>
<polyline points="279.50,346.00 520.00,346.00" fill="none" stroke="#505050" stroke-width="0.9" stroke-dasharray="2.6,1.9"/>
<polyline points="520.00,346.00 520.00,279.40 562.00,279.40" fill="none" stroke="#6a726a" stroke-width="1.0" stroke-dasharray="1.5,2.2"/>
<polyline points="520.00,336.40 562.00,336.40" fill="none" stroke="#6a726a" stroke-width="1.0" stroke-dasharray="1.5,2.2"/>
<circle cx="520" cy="336.4" r="1.1" fill="#333"/>
<rect x="179.00" y="99.00" width="21.30" height="19.50" fill="#dcccf4" stroke="#404050" stroke-width="0.9"/>
<text x="181.20" y="105.60" font-size="3.8" fill="#3c2c60" stroke="#3c2c60" stroke-width="0.15" textLength="12.50" lengthAdjust="spacingAndGlyphs">OPCUA</text>
<text x="181.20" y="111.20" font-size="3.8" fill="#3c2c60" stroke="#3c2c60" stroke-width="0.15" textLength="11.50" lengthAdjust="spacingAndGlyphs">server</text>
<text x="201.50" y="107.01" font-size="4.2" fill="#4a4a4a" stroke="#4a4a4a" stroke-width="0.08" textLength="6.00" lengthAdjust="spacingAndGlyphs">Grp</text>
<polygon points="557.3,106 563.50,106 566,108.50 563.50,111 557.3,111" fill="#38c438" stroke="#1a5a1a" stroke-width="0.8" stroke-linejoin="round"/>
<text x="557.50" y="115.95" font-size="4.3" fill="#666666" stroke="#666666" stroke-width="0.05" textLength="47.30" lengthAdjust="spacingAndGlyphs">OPCUAItemOutput29\Grp</text>
<text x="557.50" y="120.90" font-size="4.3" fill="#666666" stroke="#666666" stroke-width="0.05" textLength="47.30" lengthAdjust="spacingAndGlyphs">OPCUAItemOutput21\Grp</text>
<text x="557.50" y="125.85" font-size="4.3" fill="#666666" stroke="#666666" stroke-width="0.05" textLength="45.05" lengthAdjust="spacingAndGlyphs">OPCUAItemInput28\Grp</text>
<text x="557.50" y="130.80" font-size="4.3" fill="#666666" stroke="#666666" stroke-width="0.05" textLength="45.05" lengthAdjust="spacingAndGlyphs">OPCUAItemInput29\Grp</text>
<text x="557.50" y="135.75" font-size="4.3" fill="#666666" stroke="#666666" stroke-width="0.05" textLength="47.30" lengthAdjust="spacingAndGlyphs">OPCUAItemOutput16\Grp</text>
<text x="557.50" y="140.70" font-size="4.3" fill="#666666" stroke="#666666" stroke-width="0.05" textLength="47.30" lengthAdjust="spacingAndGlyphs">OPCUAItemOutput26\Grp</text>
<text x="557.50" y="145.65" font-size="4.3" fill="#666666" stroke="#666666" stroke-width="0.05" textLength="47.30" lengthAdjust="spacingAndGlyphs">OPCUAItemOutput27\Grp</text>
<text x="557.50" y="150.60" font-size="4.3" fill="#666666" stroke="#666666" stroke-width="0.05" textLength="45.05" lengthAdjust="spacingAndGlyphs">OPCUAItemInput35\Grp</text>
<text x="557.50" y="155.55" font-size="4.3" fill="#666666" stroke="#666666" stroke-width="0.05" textLength="45.05" lengthAdjust="spacingAndGlyphs">OPCUAItemInput30\Grp</text>
<text x="557.50" y="160.50" font-size="4.3" fill="#666666" stroke="#666666" stroke-width="0.05" textLength="47.30" lengthAdjust="spacingAndGlyphs">OPCUAItemOutput10\Grp</text>
<text x="557.50" y="165.45" font-size="4.3" fill="#666666" stroke="#666666" stroke-width="0.05" textLength="47.30" lengthAdjust="spacingAndGlyphs">OPCUAItemOutput18\Grp</text>
<text x="557.50" y="170.40" font-size="4.3" fill="#666666" stroke="#666666" stroke-width="0.05" textLength="45.05" lengthAdjust="spacingAndGlyphs">OPCUAItemInput60\Grp</text>
<text x="557.50" y="175.35" font-size="4.3" fill="#666666" stroke="#666666" stroke-width="0.05" textLength="47.30" lengthAdjust="spacingAndGlyphs">OPCUAItemOutput58\Grp</text>
<text x="557.50" y="180.30" font-size="4.3" fill="#666666" stroke="#666666" stroke-width="0.05" textLength="47.30" lengthAdjust="spacingAndGlyphs">OPCUAItemOutput59\Grp</text>
<text x="557.50" y="185.25" font-size="4.3" fill="#666666" stroke="#666666" stroke-width="0.05" textLength="45.05" lengthAdjust="spacingAndGlyphs">OPCUAItemInput82\Grp</text>
<text x="557.50" y="190.20" font-size="4.3" fill="#666666" stroke="#666666" stroke-width="0.05" textLength="47.30" lengthAdjust="spacingAndGlyphs">OPCUAItemOutput60\Grp</text>
<text x="557.50" y="195.15" font-size="4.3" fill="#666666" stroke="#666666" stroke-width="0.05" textLength="47.30" lengthAdjust="spacingAndGlyphs">OPCUAItemOutput40\Grp</text>
<text x="557.50" y="200.10" font-size="4.3" fill="#666666" stroke="#666666" stroke-width="0.05" textLength="49.55" lengthAdjust="spacingAndGlyphs">OPCUAItemOutput108\Grp</text>
<text x="557.50" y="205.05" font-size="4.3" fill="#666666" stroke="#666666" stroke-width="0.05" textLength="49.55" lengthAdjust="spacingAndGlyphs">OPCUAItemOutput100\Grp</text>
<text x="557.50" y="210.00" font-size="4.3" fill="#666666" stroke="#666666" stroke-width="0.05" textLength="49.55" lengthAdjust="spacingAndGlyphs">OPCUAItemOutput102\Grp</text>
<text x="557.50" y="214.95" font-size="4.3" fill="#666666" stroke="#666666" stroke-width="0.05" textLength="49.55" lengthAdjust="spacingAndGlyphs">OPCUAItemOutput103\Grp</text>
<text x="557.50" y="219.90" font-size="4.3" fill="#666666" stroke="#666666" stroke-width="0.05" textLength="49.55" lengthAdjust="spacingAndGlyphs">OPCUAItemOutput102\Grp</text>
<text x="557.50" y="224.85" font-size="4.3" fill="#666666" stroke="#666666" stroke-width="0.05" textLength="47.30" lengthAdjust="spacingAndGlyphs">OPCUAItemOutput98\Grp</text>
<text x="557.50" y="229.80" font-size="4.3" fill="#666666" stroke="#666666" stroke-width="0.05" textLength="47.30" lengthAdjust="spacingAndGlyphs">OPCUAItemOutput99\Grp</text>
<text x="557.50" y="234.75" font-size="4.3" fill="#666666" stroke="#666666" stroke-width="0.05" textLength="49.55" lengthAdjust="spacingAndGlyphs">OPCUAItemOutput110\Grp</text>
<text x="557.50" y="239.70" font-size="4.3" fill="#666666" stroke="#666666" stroke-width="0.05" textLength="49.55" lengthAdjust="spacingAndGlyphs">OPCUAItemOutput111\Grp</text>
<text x="557.50" y="244.65" font-size="4.3" fill="#666666" stroke="#666666" stroke-width="0.05" textLength="49.55" lengthAdjust="spacingAndGlyphs">OPCUAItemOutput112\Grp</text>
<text x="183.30" y="128.01" font-size="4.2" fill="#4a4a4a" stroke="#4a4a4a" stroke-width="0.08" textLength="22.70" lengthAdjust="spacingAndGlyphs">BUK22\Out1</text>
<path d="M183.3,130 H190.90 Q192.4,130 192.4,132.50 Q192.4,135 190.90,135 H183.3 L184.70,132.50 Z" fill="#38c438" stroke="#1a5a1a" stroke-width="0.8" stroke-linejoin="round"/>
<text x="183.30" y="142.51" font-size="4.2" fill="#4a4a4a" stroke="#4a4a4a" stroke-width="0.08" textLength="22.70" lengthAdjust="spacingAndGlyphs">BUK22\Out2</text>
<path d="M183.3,144 H190.90 Q192.4,144 192.4,146.50 Q192.4,149 190.90,149 H183.3 L184.70,146.50 Z" fill="#38c438" stroke="#1a5a1a" stroke-width="0.8" stroke-linejoin="round"/>
<text x="227.60" y="129.16" font-size="4.6" fill="#c05050" stroke="#c05050" stroke-width="0.08" textLength="14.40" lengthAdjust="spacingAndGlyphs">откр.</text>
<text x="228.50" y="143.16" font-size="4.6" fill="#c05050" stroke="#c05050" stroke-width="0.08" textLength="12.50" lengthAdjust="spacingAndGlyphs">закр.</text>
<rect x="246.60" y="125.00" width="4.80" height="6.60" fill="#c81e28"/>
<text x="247.96" y="129.96" font-size="4.619999999999996" fill="#ffffff" textLength="2.08" lengthAdjust="spacingAndGlyphs">0</text>
<text x="252.00" y="129.51" font-size="4.2" fill="#4a4a4a" stroke="#4a4a4a" stroke-width="0.08" textLength="6.00" lengthAdjust="spacingAndGlyphs">In1</text>
<rect x="246.60" y="135.00" width="4.80" height="6.60" fill="#c81e28"/>
<text x="247.96" y="139.96" font-size="4.619999999999996" fill="#ffffff" textLength="2.08" lengthAdjust="spacingAndGlyphs">0</text>
<text x="252.00" y="139.01" font-size="4.2" fill="#4a4a4a" stroke="#4a4a4a" stroke-width="0.08" textLength="6.00" lengthAdjust="spacingAndGlyphs">In2</text>
<rect x="258.40" y="122.60" width="25.30" height="38.40" fill="#72f072" stroke="#3a6a3a" stroke-width="0.9"/>
<text x="262.80" y="133.30" font-size="6.4" fill="#1d5a1d" stroke="#1d5a1d" stroke-width="0.3" textLength="16.20" lengthAdjust="spacingAndGlyphs">Valve1</text>
<text x="284.50" y="129.51" font-size="4.2" fill="#4a4a4a" stroke="#4a4a4a" stroke-width="0.08" textLength="8.50" lengthAdjust="spacingAndGlyphs">Out1</text>
<text x="284.50" y="148.51" font-size="4.2" fill="#4a4a4a" stroke="#4a4a4a" stroke-width="0.08" textLength="8.50" lengthAdjust="spacingAndGlyphs">Out2</text>
<rect x="300.00" y="168.60" width="10.40" height="6.30" fill="#c81e28"/>
<text x="300.70" y="173.52" font-size="4.9140000000000095" fill="#ffffff" textLength="9.00" lengthAdjust="spacingAndGlyphs" font-weight="bold">67,3</text>
<text x="311.30" y="173.01" font-size="4.2" fill="#4a4a4a" stroke="#4a4a4a" stroke-width="0.08" textLength="8.20" lengthAdjust="spacingAndGlyphs">InVal</text>
<rect x="320.40" y="165.30" width="21.20" height="19.40" fill="#d6eaf0" stroke="#5a6a70" stroke-width="0.9"/>
<text x="326.50" y="172.90" font-size="6.2" fill="#222" stroke="#222" stroke-width="0.12" textLength="4.30" lengthAdjust="spacingAndGlyphs">K</text>
<rect x="323.10" y="174.00" width="16.20" height="0.80" fill="#333"/>
<text x="323.70" y="180.10" font-size="5.6" fill="#222" stroke="#222" stroke-width="0.12" textLength="12.60" lengthAdjust="spacingAndGlyphs">Tp + 1</text>
<text x="342.90" y="173.01" font-size="4.2" fill="#4a4a4a" stroke="#4a4a4a" stroke-width="0.08" textLength="11.70" lengthAdjust="spacingAndGlyphs">OutVal</text>
<rect x="374.00" y="188.00" width="10.00" height="6.00" fill="#c81e28"/>
<text x="374.70" y="192.68" font-size="4.68" fill="#ffffff" textLength="8.60" lengthAdjust="spacingAndGlyphs" font-weight="bold">67,3</text>
<text x="385.00" y="192.01" font-size="4.2" fill="#4a4a4a" stroke="#4a4a4a" stroke-width="0.08" textLength="5.50" lengthAdjust="spacingAndGlyphs">In1</text>
<rect x="373.00" y="197.00" width="11.00" height="6.30" fill="#c81e28"/>
<text x="373.70" y="201.92" font-size="4.9140000000000095" fill="#ffffff" textLength="9.60" lengthAdjust="spacingAndGlyphs" font-weight="bold">0,03</text>
<text x="385.00" y="201.01" font-size="4.2" fill="#4a4a4a" stroke="#4a4a4a" stroke-width="0.08" textLength="5.50" lengthAdjust="spacingAndGlyphs">In2</text>
<rect x="380.70" y="206.20" width="3.30" height="6.10" fill="#c81e28"/>
<text x="381.40" y="210.79" font-size="4.270000000000016" fill="#ffffff" textLength="1.90" lengthAdjust="spacingAndGlyphs">1</text>
<text x="385.00" y="210.51" font-size="4.2" fill="#4a4a4a" stroke="#4a4a4a" stroke-width="0.08" textLength="5.50" lengthAdjust="spacingAndGlyphs">In3</text>
<rect x="391.30" y="189.00" width="16.70" height="28.60" fill="#72f072" stroke="#3a6a3a" stroke-width="0.9"/>
<text x="395.30" y="199.50" font-size="5.8" fill="#1d5a1d" stroke="#1d5a1d" stroke-width="0.3">Q</text>
<text x="409.00" y="196.51" font-size="4.2" fill="#4a4a4a" stroke="#4a4a4a" stroke-width="0.08" textLength="8.50" lengthAdjust="spacingAndGlyphs">Out1</text>
<rect x="316.20" y="198.00" width="17.10" height="15.20" fill="#d6eaf0" stroke="#5a6a70" stroke-width="0.9"/>
<text x="317.50" y="203.80" font-size="4.6" fill="#2a2a2a" stroke="#2a2a2a" stroke-width="0.2" textLength="9.20" lengthAdjust="spacingAndGlyphs">VAR</text>
<text x="334.50" y="201.51" font-size="4.2" fill="#4a4a4a" stroke="#4a4a4a" stroke-width="0.08" textLength="10.50" lengthAdjust="spacingAndGlyphs">Value</text>
<rect x="316.20" y="217.00" width="17.10" height="15.20" fill="#d6eaf0" stroke="#5a6a70" stroke-width="0.9"/>
<text x="317.50" y="222.80" font-size="4.6" fill="#2a2a2a" stroke="#2a2a2a" stroke-width="0.2" textLength="9.20" lengthAdjust="spacingAndGlyphs">VAR</text>
<text x="334.50" y="220.51" font-size="4.2" fill="#4a4a4a" stroke="#4a4a4a" stroke-width="0.08" textLength="10.50" lengthAdjust="spacingAndGlyphs">Value</text>
<rect x="406.00" y="220.50" width="12.90" height="6.30" fill="#c81e28"/>
<text x="406.70" y="225.42" font-size="4.9140000000000095" fill="#ffffff" textLength="11.50" lengthAdjust="spacingAndGlyphs" font-weight="bold">14,37</text>
<text x="419.80" y="225.01" font-size="4.2" fill="#4a4a4a" stroke="#4a4a4a" stroke-width="0.08" textLength="8.60" lengthAdjust="spacingAndGlyphs">InVal</text>
<rect x="428.80" y="217.00" width="21.20" height="19.70" fill="#d6eaf0" stroke="#5a6a70" stroke-width="0.9"/>
<polyline points="432.20,222.00 434.00,223.20 432.20,224.40" fill="none" stroke="#333" stroke-width="0.5"/>
<polyline points="434.20,225.30 438.40,225.30 438.40,221.30 441.60,221.30" fill="none" stroke="#1a1a1a" stroke-width="1.3"/>
<text x="450.40" y="223.01" font-size="4.2" fill="#4a4a4a" stroke="#4a4a4a" stroke-width="0.08" textLength="11.60" lengthAdjust="spacingAndGlyphs">OutVal</text>
<rect x="463.80" y="244.70" width="3.60" height="5.40" fill="#c81e28"/>
<text x="464.75" y="248.76" font-size="3.780000000000004" fill="#ffffff" textLength="1.70" lengthAdjust="spacingAndGlyphs">1</text>
<text x="468.00" y="247.87" font-size="3.8" fill="#4a4a4a" stroke="#4a4a4a" stroke-width="0.08" textLength="5.50" lengthAdjust="spacingAndGlyphs">In1</text>
<rect x="463.80" y="254.60" width="3.60" height="5.40" fill="#c81e28"/>
<text x="464.75" y="258.66" font-size="3.780000000000004" fill="#ffffff" textLength="1.70" lengthAdjust="spacingAndGlyphs">1</text>
<text x="468.00" y="257.37" font-size="3.8" fill="#4a4a4a" stroke="#4a4a4a" stroke-width="0.08" textLength="5.50" lengthAdjust="spacingAndGlyphs">In2</text>
<rect x="474.10" y="246.20" width="21.60" height="19.20" fill="#d6eaf0" stroke="#5a6a70" stroke-width="0.9"/>
<polyline points="476.60,256.00 476.60,249.60 481.00,249.60 481.00,256.00" fill="none" stroke="#303030" stroke-width="0.8"/>
<polyline points="478.00,256.00 478.00,251.00 479.60,251.00 479.60,256.00" fill="none" stroke="#303030" stroke-width="0.5"/>
<text x="496.50" y="254.01" font-size="4.2" fill="#4a4a4a" stroke="#4a4a4a" stroke-width="0.08" textLength="6.30" lengthAdjust="spacingAndGlyphs">Out</text>
<polygon points="516,130 522.25,130 524.5,132.25 522.25,134.5 516,134.5" fill="#38c438" stroke="#1a5a1a" stroke-width="0.8" stroke-linejoin="round"/>
<rect x="505.00" y="135.00" width="10.00" height="5.30" fill="#c81e28"/>
<text x="505.70" y="139.14" font-size="4.134000000000009" fill="#ffffff" textLength="8.60" lengthAdjust="spacingAndGlyphs" font-weight="bold">67,3</text>
<text x="516.00" y="139.24" font-size="4.0" fill="#4a4a4a" stroke="#4a4a4a" stroke-width="0.08" textLength="19.50" lengthAdjust="spacingAndGlyphs">BUK22\In3</text>
<polygon points="516,168 522.00,168 524.5,170.50 522.00,173 516,173" fill="#38c438" stroke="#1a5a1a" stroke-width="0.8" stroke-linejoin="round"/>
<rect x="510.50" y="172.50" width="4.50" height="5.20" fill="#c81e28"/>
<text x="511.93" y="176.41" font-size="3.6399999999999917" fill="#ffffff" textLength="1.64" lengthAdjust="spacingAndGlyphs">1</text>
<text x="516.00" y="176.94" font-size="4.0" fill="#4a4a4a" stroke="#4a4a4a" stroke-width="0.08" textLength="19.50" lengthAdjust="spacingAndGlyphs">BUK22\In2</text>
<text x="516.00" y="181.74" font-size="4.0" fill="#4a4a4a" stroke="#4a4a4a" stroke-width="0.08" textLength="51.50" lengthAdjust="spacingAndGlyphs">OPCUAItemOutput27\Grp</text>
<text x="183.30" y="199.21" font-size="4.2" fill="#4a4a4a" stroke="#4a4a4a" stroke-width="0.08" textLength="22.70" lengthAdjust="spacingAndGlyphs">BUK30\Out1</text>
<path d="M183.3,201.3 H190.93 Q192.4,201.3 192.4,203.75 Q192.4,206.2 190.93,206.2 H183.3 L184.70,203.75 Z" fill="#38c438" stroke="#1a5a1a" stroke-width="0.8" stroke-linejoin="round"/>
<text x="183.30" y="213.51" font-size="4.2" fill="#4a4a4a" stroke="#4a4a4a" stroke-width="0.08" textLength="22.70" lengthAdjust="spacingAndGlyphs">BUK30\Out2</text>
<path d="M183.3,215.2 H190.96 Q192.4,215.2 192.4,217.60 Q192.4,220 190.96,220 H183.3 L184.70,217.60 Z" fill="#38c438" stroke="#1a5a1a" stroke-width="0.8" stroke-linejoin="round"/>
<text x="229.50" y="200.66" font-size="4.6" fill="#c05050" stroke="#c05050" stroke-width="0.08" textLength="13.30" lengthAdjust="spacingAndGlyphs">откр.</text>
<text x="230.40" y="214.66" font-size="4.6" fill="#c05050" stroke="#c05050" stroke-width="0.08" textLength="12.40" lengthAdjust="spacingAndGlyphs">закр.</text>
<rect x="250.40" y="239.30" width="4.80" height="6.90" fill="#c81e28"/>
<text x="251.71" y="244.49" font-size="4.829999999999984" fill="#ffffff" textLength="2.17" lengthAdjust="spacingAndGlyphs">0</text>
<text x="256.00" y="243.51" font-size="4.2" fill="#4a4a4a" stroke="#4a4a4a" stroke-width="0.08" textLength="5.50" lengthAdjust="spacingAndGlyphs">In1</text>
<rect x="250.40" y="248.40" width="4.80" height="6.70" fill="#c81e28"/>
<text x="251.74" y="253.44" font-size="4.6899999999999915" fill="#ffffff" textLength="2.11" lengthAdjust="spacingAndGlyphs">0</text>
<text x="256.00" y="253.01" font-size="4.2" fill="#4a4a4a" stroke="#4a4a4a" stroke-width="0.08" textLength="5.50" lengthAdjust="spacingAndGlyphs">In2</text>
<rect x="262.40" y="236.50" width="25.10" height="38.10" fill="#72f072" stroke="#3a6a3a" stroke-width="0.9"/>
<text x="267.00" y="247.00" font-size="6.4" fill="#1d5a1d" stroke="#1d5a1d" stroke-width="0.3" textLength="16.20" lengthAdjust="spacingAndGlyphs">Valve2</text>
<text x="288.40" y="243.71" font-size="4.2" fill="#4a4a4a" stroke="#4a4a4a" stroke-width="0.08" textLength="9.00" lengthAdjust="spacingAndGlyphs">Out1</text>
<text x="288.40" y="262.91" font-size="4.2" fill="#4a4a4a" stroke="#4a4a4a" stroke-width="0.08" textLength="9.00" lengthAdjust="spacingAndGlyphs">Out2</text>
<polygon points="390.8,243.6 397.10,243.6 400,246.50 397.10,249.4 390.8,249.4" fill="#38c438" stroke="#1a5a1a" stroke-width="0.8" stroke-linejoin="round"/>
<rect x="380.30" y="247.80" width="10.50" height="6.20" fill="#c81e28"/>
<text x="381.00" y="252.64" font-size="4.835999999999991" fill="#ffffff" textLength="9.10" lengthAdjust="spacingAndGlyphs" font-weight="bold">37,8</text>
<text x="392.70" y="253.87" font-size="3.8" fill="#4a4a4a" stroke="#4a4a4a" stroke-width="0.08" textLength="17.10" lengthAdjust="spacingAndGlyphs">BUK30\In3</text>
<polygon points="390.8,263 397.75,263 400,265.25 397.75,267.5 390.8,267.5" fill="#38c438" stroke="#1a5a1a" stroke-width="0.8" stroke-linejoin="round"/>
<rect x="386.00" y="267.50" width="4.40" height="5.30" fill="#c81e28"/>
<text x="387.37" y="271.49" font-size="3.7100000000000075" fill="#ffffff" textLength="1.67" lengthAdjust="spacingAndGlyphs">1</text>
<text x="391.70" y="271.87" font-size="3.8" fill="#4a4a4a" stroke="#4a4a4a" stroke-width="0.08" textLength="20.00" lengthAdjust="spacingAndGlyphs">BUK30\In2</text>
<rect x="294.20" y="268.00" width="11.00" height="6.30" fill="#c81e28"/>
<text x="294.90" y="272.92" font-size="4.9140000000000095" fill="#ffffff" textLength="9.60" lengthAdjust="spacingAndGlyphs" font-weight="bold">37,8</text>
<text x="306.00" y="271.87" font-size="3.8" fill="#4a4a4a" stroke="#4a4a4a" stroke-width="0.08" textLength="5.50" lengthAdjust="spacingAndGlyphs">In1</text>
<rect x="299.10" y="277.60" width="6.10" height="6.20" fill="#c81e28"/>
<text x="299.80" y="282.44" font-size="4.835999999999991" fill="#ffffff" textLength="4.70" lengthAdjust="spacingAndGlyphs" font-weight="bold">10</text>
<text x="306.00" y="281.17" font-size="3.8" fill="#4a4a4a" stroke="#4a4a4a" stroke-width="0.08" textLength="5.50" lengthAdjust="spacingAndGlyphs">In2</text>
<rect x="258.40" y="288.50" width="16.70" height="15.20" fill="#d6eaf0" stroke="#5a6a70" stroke-width="0.9"/>
<text x="259.80" y="294.30" font-size="4.6" fill="#2a2a2a" stroke="#2a2a2a" stroke-width="0.2" textLength="9.20" lengthAdjust="spacingAndGlyphs">VAR</text>
<text x="276.00" y="291.71" font-size="4.2" fill="#4a4a4a" stroke="#4a4a4a" stroke-width="0.08" textLength="10.50" lengthAdjust="spacingAndGlyphs">Value</text>
<rect x="312.40" y="270.00" width="20.90" height="19.00" fill="#72f072" stroke="#3a6a3a" stroke-width="0.9"/>
<polygon points="316.8,281.8 320.5,274.2 330,274.2 326.3,281.8" fill="none" stroke="#1a4a1a" stroke-width="0.9"/>
<polyline points="317.80,277.50 329.00,277.50" fill="none" stroke="#1a4a1a" stroke-width="0.7"/>
<polyline points="317.20,279.40 328.40,279.40" fill="none" stroke="#1a4a1a" stroke-width="0.7"/>
<text x="333.70" y="276.37" font-size="3.8" fill="#4a4a4a" stroke="#4a4a4a" stroke-width="0.08" textLength="3.00" lengthAdjust="spacingAndGlyphs">Out</text>
<rect x="337.10" y="272.80" width="10.90" height="6.10" fill="#c81e28"/>
<text x="337.80" y="277.56" font-size="4.757999999999973" fill="#ffffff" textLength="9.50" lengthAdjust="spacingAndGlyphs" font-weight="bold">22,8</text>
<text x="348.50" y="277.01" font-size="4.2" fill="#4a4a4a" stroke="#4a4a4a" stroke-width="0.08" textLength="8.00" lengthAdjust="spacingAndGlyphs">InVal</text>
<rect x="357.50" y="269.60" width="21.50" height="19.40" fill="#d6eaf0" stroke="#5a6a70" stroke-width="0.9"/>
<text x="363.60" y="277.20" font-size="6.2" fill="#222" stroke="#222" stroke-width="0.12" textLength="4.30" lengthAdjust="spacingAndGlyphs">K</text>
<rect x="360.20" y="278.40" width="16.60" height="0.80" fill="#333"/>
<text x="360.80" y="284.40" font-size="5.6" fill="#222" stroke="#222" stroke-width="0.12" textLength="12.60" lengthAdjust="spacingAndGlyphs">Tp + 1</text>
<text x="379.70" y="277.01" font-size="4.2" fill="#4a4a4a" stroke="#4a4a4a" stroke-width="0.08" textLength="12.00" lengthAdjust="spacingAndGlyphs">OutVal</text>
<rect x="402.20" y="277.20" width="11.00" height="6.60" fill="#c81e28"/>
<text x="402.90" y="282.35" font-size="5.148000000000018" fill="#ffffff" textLength="9.60" lengthAdjust="spacingAndGlyphs" font-weight="bold">22,8</text>
<text x="414.00" y="281.87" font-size="3.8" fill="#4a4a4a" stroke="#4a4a4a" stroke-width="0.08" textLength="5.50" lengthAdjust="spacingAndGlyphs">In1</text>
<rect x="402.20" y="287.00" width="11.00" height="6.70" fill="#c81e28"/>
<text x="402.90" y="292.23" font-size="5.225999999999991" fill="#ffffff" textLength="9.60" lengthAdjust="spacingAndGlyphs" font-weight="bold">0,03</text>
<text x="414.00" y="291.67" font-size="3.8" fill="#4a4a4a" stroke="#4a4a4a" stroke-width="0.08" textLength="5.50" lengthAdjust="spacingAndGlyphs">In2</text>
<rect x="403.00" y="296.60" width="10.20" height="6.30" fill="#c81e28"/>
<text x="403.70" y="301.52" font-size="4.913999999999965" fill="#ffffff" textLength="8.80" lengthAdjust="spacingAndGlyphs" font-weight="bold">40,1</text>
<text x="414.00" y="301.17" font-size="3.8" fill="#4a4a4a" stroke="#4a4a4a" stroke-width="0.08" textLength="5.50" lengthAdjust="spacingAndGlyphs">In3</text>
<rect x="420.20" y="279.50" width="17.30" height="28.50" fill="#72f072" stroke="#3a6a3a" stroke-width="0.9"/>
<text x="424.50" y="290.00" font-size="5.8" fill="#1d5a1d" stroke="#1d5a1d" stroke-width="0.3">Q</text>
<text x="438.00" y="286.51" font-size="4.2" fill="#4a4a4a" stroke="#4a4a4a" stroke-width="0.08" textLength="9.00" lengthAdjust="spacingAndGlyphs">Out1</text>
<rect x="379.00" y="293.30" width="16.50" height="14.70" fill="#d6eaf0" stroke="#5a6a70" stroke-width="0.9"/>
<text x="380.50" y="299.00" font-size="4.6" fill="#2a2a2a" stroke="#2a2a2a" stroke-width="0.2" textLength="9.20" lengthAdjust="spacingAndGlyphs">VAR</text>
<text x="396.50" y="295.87" font-size="3.8" fill="#4a4a4a" stroke="#4a4a4a" stroke-width="0.08" textLength="8.00" lengthAdjust="spacingAndGlyphs">Value</text>
<rect x="367.60" y="315.60" width="4.10" height="6.30" fill="#c81e28"/>
<text x="368.66" y="320.34" font-size="4.409999999999968" fill="#ffffff" textLength="1.98" lengthAdjust="spacingAndGlyphs">1</text>
<text x="372.50" y="319.87" font-size="3.8" fill="#4a4a4a" stroke="#4a4a4a" stroke-width="0.08" textLength="5.50" lengthAdjust="spacingAndGlyphs">In1</text>
<rect x="360.70" y="325.00" width="11.00" height="6.40" fill="#c81e28"/>
<text x="361.40" y="330.00" font-size="4.991999999999982" fill="#ffffff" textLength="9.60" lengthAdjust="spacingAndGlyphs" font-weight="bold">40,1</text>
<text x="372.50" y="329.37" font-size="3.8" fill="#4a4a4a" stroke="#4a4a4a" stroke-width="0.08" textLength="5.50" lengthAdjust="spacingAndGlyphs">In2</text>
<rect x="378.40" y="317.50" width="21.50" height="19.00" fill="#d6eaf0" stroke="#5a6a70" stroke-width="0.9"/>
<text x="380.30" y="326.50" font-size="7.5" fill="#111" stroke="#111" stroke-width="0.12">Σ</text>
<text x="400.60" y="322.01" font-size="4.2" fill="#4a4a4a" stroke="#4a4a4a" stroke-width="0.08" textLength="6.40" lengthAdjust="spacingAndGlyphs">Out</text>
<rect x="470.00" y="350.75" width="25.50" height="38.50" fill="#72f072" stroke="#3a6a3a" stroke-width="0.9"/>
<text x="473.50" y="357.50" font-size="5.4" fill="#1d5a1d" stroke="#1d5a1d" stroke-width="0.2" textLength="13.00" lengthAdjust="spacingAndGlyphs">Barel</text>
<rect x="450.00" y="353.00" width="13.00" height="6.50" fill="#c81e28"/>
<text x="450.70" y="358.08" font-size="5.07" fill="#ffffff" textLength="11.60" lengthAdjust="spacingAndGlyphs" font-weight="bold">14,37</text>
<text x="463.80" y="357.37" font-size="3.8" fill="#4a4a4a" stroke="#4a4a4a" stroke-width="0.08" textLength="5.50" lengthAdjust="spacingAndGlyphs">In1</text>
<rect x="450.00" y="363.00" width="13.00" height="6.50" fill="#c81e28"/>
<text x="450.70" y="368.08" font-size="5.07" fill="#ffffff" textLength="11.60" lengthAdjust="spacingAndGlyphs" font-weight="bold">14,47</text>
<text x="463.80" y="367.37" font-size="3.8" fill="#4a4a4a" stroke="#4a4a4a" stroke-width="0.08" textLength="5.50" lengthAdjust="spacingAndGlyphs">In2</text>
<rect x="450.00" y="372.50" width="13.00" height="6.25" fill="#c81e28"/>
<text x="450.70" y="377.38" font-size="4.875" fill="#ffffff" textLength="11.60" lengthAdjust="spacingAndGlyphs" font-weight="bold">0,037</text>
<text x="463.80" y="376.97" font-size="3.8" fill="#4a4a4a" stroke="#4a4a4a" stroke-width="0.08" textLength="5.50" lengthAdjust="spacingAndGlyphs">In3</text>
<rect x="407.50" y="373.75" width="17.00" height="15.75" fill="#d6eaf0" stroke="#5a6a70" stroke-width="0.9"/>
<text x="409.00" y="379.50" font-size="4.6" fill="#2a2a2a" stroke="#2a2a2a" stroke-width="0.2" textLength="9.20" lengthAdjust="spacingAndGlyphs">VAR</text>
<text x="425.50" y="377.01" font-size="4.2" fill="#4a4a4a" stroke="#4a4a4a" stroke-width="0.08" textLength="10.50" lengthAdjust="spacingAndGlyphs">Value</text>
<text x="496.00" y="367.01" font-size="4.2" fill="#4a4a4a" stroke="#4a4a4a" stroke-width="0.08" textLength="9.00" lengthAdjust="spacingAndGlyphs">Out1</text>
<text x="496.00" y="376.81" font-size="4.2" fill="#4a4a4a" stroke="#4a4a4a" stroke-width="0.08" textLength="9.00" lengthAdjust="spacingAndGlyphs">Out2</text>
<polygon points="557.6,391 563.50,391 566,393.50 563.50,396 557.6,396" fill="#38c438" stroke="#1a5a1a" stroke-width="0.8" stroke-linejoin="round"/>
<rect x="545.60" y="396.00" width="11.40" height="5.60" fill="#c81e28"/>
<text x="546.76" y="400.37" font-size="4.368000000000018" fill="#ffffff" textLength="9.09" lengthAdjust="spacingAndGlyphs" font-weight="bold">40,3</text>
<text x="558.00" y="400.24" font-size="4.0" fill="#4a4a4a" stroke="#4a4a4a" stroke-width="0.08" textLength="16.47" lengthAdjust="spacingAndGlyphs">Sub68\In2</text>
<text x="558.00" y="405.14" font-size="4.0" fill="#4a4a4a" stroke="#4a4a4a" stroke-width="0.08" textLength="31.11" lengthAdjust="spacingAndGlyphs">CmpLess88\Initial</text>
<text x="558.00" y="410.04" font-size="4.0" fill="#4a4a4a" stroke="#4a4a4a" stroke-width="0.08" textLength="16.47" lengthAdjust="spacingAndGlyphs">Sub67\In2</text>
<text x="558.00" y="414.94" font-size="4.0" fill="#4a4a4a" stroke="#4a4a4a" stroke-width="0.08" textLength="23.79" lengthAdjust="spacingAndGlyphs">Lag88\Initial</text>
<polygon points="557.6,429 563.50,429 566,431.50 563.50,434 557.6,434" fill="#38c438" stroke="#1a5a1a" stroke-width="0.8" stroke-linejoin="round"/>
<rect x="544.00" y="434.00" width="13.00" height="5.60" fill="#c81e28"/>
<text x="544.82" y="438.37" font-size="4.368000000000018" fill="#ffffff" textLength="11.36" lengthAdjust="spacingAndGlyphs" font-weight="bold">14,47</text>
<text x="558.00" y="438.24" font-size="4.0" fill="#4a4a4a" stroke="#4a4a4a" stroke-width="0.08" textLength="18.00" lengthAdjust="spacingAndGlyphs">Sub44\In2</text>
<rect x="562.00" y="274.40" width="20.70" height="19.40" fill="#dcccf4" stroke="#404050" stroke-width="0.9"/>
<text x="564.50" y="280.30" font-size="3.6" fill="#3a2a66" stroke="#3a2a66" stroke-width="0.15" textLength="13.00" lengthAdjust="spacingAndGlyphs">OPCUA</text>
<text x="564.50" y="285.50" font-size="3.6" fill="#3a2a66" stroke="#3a2a66" stroke-width="0.15" textLength="12.00" lengthAdjust="spacingAndGlyphs">output</text>
<text x="564.50" y="290.70" font-size="3.6" fill="#3a2a66" stroke="#3a2a66" stroke-width="0.15" textLength="8.00" lengthAdjust="spacingAndGlyphs">item</text>
<text x="554.00" y="277.37" font-size="3.8" fill="#4a4a4a" stroke="#4a4a4a" stroke-width="0.08" textLength="7.00" lengthAdjust="spacingAndGlyphs">Grp</text>
<text x="550.40" y="286.87" font-size="3.8" fill="#4a4a4a" stroke="#4a4a4a" stroke-width="0.08" textLength="11.40" lengthAdjust="spacingAndGlyphs">InData</text>
<rect x="536.00" y="282.50" width="12.60" height="6.30" fill="#c81e28"/>
<text x="536.70" y="287.42" font-size="4.9140000000000095" fill="#ffffff" textLength="11.20" lengthAdjust="spacingAndGlyphs" font-weight="bold">14,47</text>
<rect x="562.00" y="332.00" width="20.70" height="19.20" fill="#dcccf4" stroke="#404050" stroke-width="0.9"/>
<text x="564.50" y="338.00" font-size="3.6" fill="#3a2a66" stroke="#3a2a66" stroke-width="0.15" textLength="13.00" lengthAdjust="spacingAndGlyphs">OPCUA</text>
<text x="564.50" y="343.20" font-size="3.6" fill="#3a2a66" stroke="#3a2a66" stroke-width="0.15" textLength="12.00" lengthAdjust="spacingAndGlyphs">output</text>
<text x="564.50" y="348.40" font-size="3.6" fill="#3a2a66" stroke="#3a2a66" stroke-width="0.15" textLength="8.00" lengthAdjust="spacingAndGlyphs">item</text>
<text x="554.00" y="334.87" font-size="3.8" fill="#4a4a4a" stroke="#4a4a4a" stroke-width="0.08" textLength="7.00" lengthAdjust="spacingAndGlyphs">Grp</text>
<text x="550.40" y="344.17" font-size="3.8" fill="#4a4a4a" stroke="#4a4a4a" stroke-width="0.08" textLength="11.40" lengthAdjust="spacingAndGlyphs">InData</text>
<rect x="537.80" y="340.00" width="10.80" height="6.00" fill="#c81e28"/>
<text x="538.50" y="344.68" font-size="4.68" fill="#ffffff" textLength="9.40" lengthAdjust="spacingAndGlyphs" font-weight="bold">40,3</text>
<rect x="171.10" y="322.40" width="25.10" height="19.30" fill="#f08484" stroke="#5a3a3a" stroke-width="0.9"/>
<text x="172.80" y="329.80" font-size="4.6" fill="#2a1010" stroke="#2a1010" stroke-width="0.12" textLength="15.50" lengthAdjust="spacingAndGlyphs">Задани</text>
<rect x="200.00" y="322.40" width="25.30" height="19.30" fill="#f08484" stroke="#5a3a3a" stroke-width="0.9"/>
<text x="201.80" y="329.80" font-size="4.6" fill="#2a1010" stroke="#2a1010" stroke-width="0.12" textLength="15.30" lengthAdjust="spacingAndGlyphs">Комфит</text>
<text x="270.70" y="341.64" font-size="4.0" fill="#4a4a4a" stroke="#4a4a4a" stroke-width="0.08" textLength="37.70" lengthAdjust="spacingAndGlyphs">OPCUAServer18\Grp</text>
<path d="M270.7,343.6 H278.06 Q279.5,343.6 279.5,346.00 Q279.5,348.4 278.06,348.4 H270.7 L272.10,346.00 Z" fill="#38c438" stroke="#1a5a1a" stroke-width="0.8" stroke-linejoin="round"/>
</g></svg>
</svg></body></html>
